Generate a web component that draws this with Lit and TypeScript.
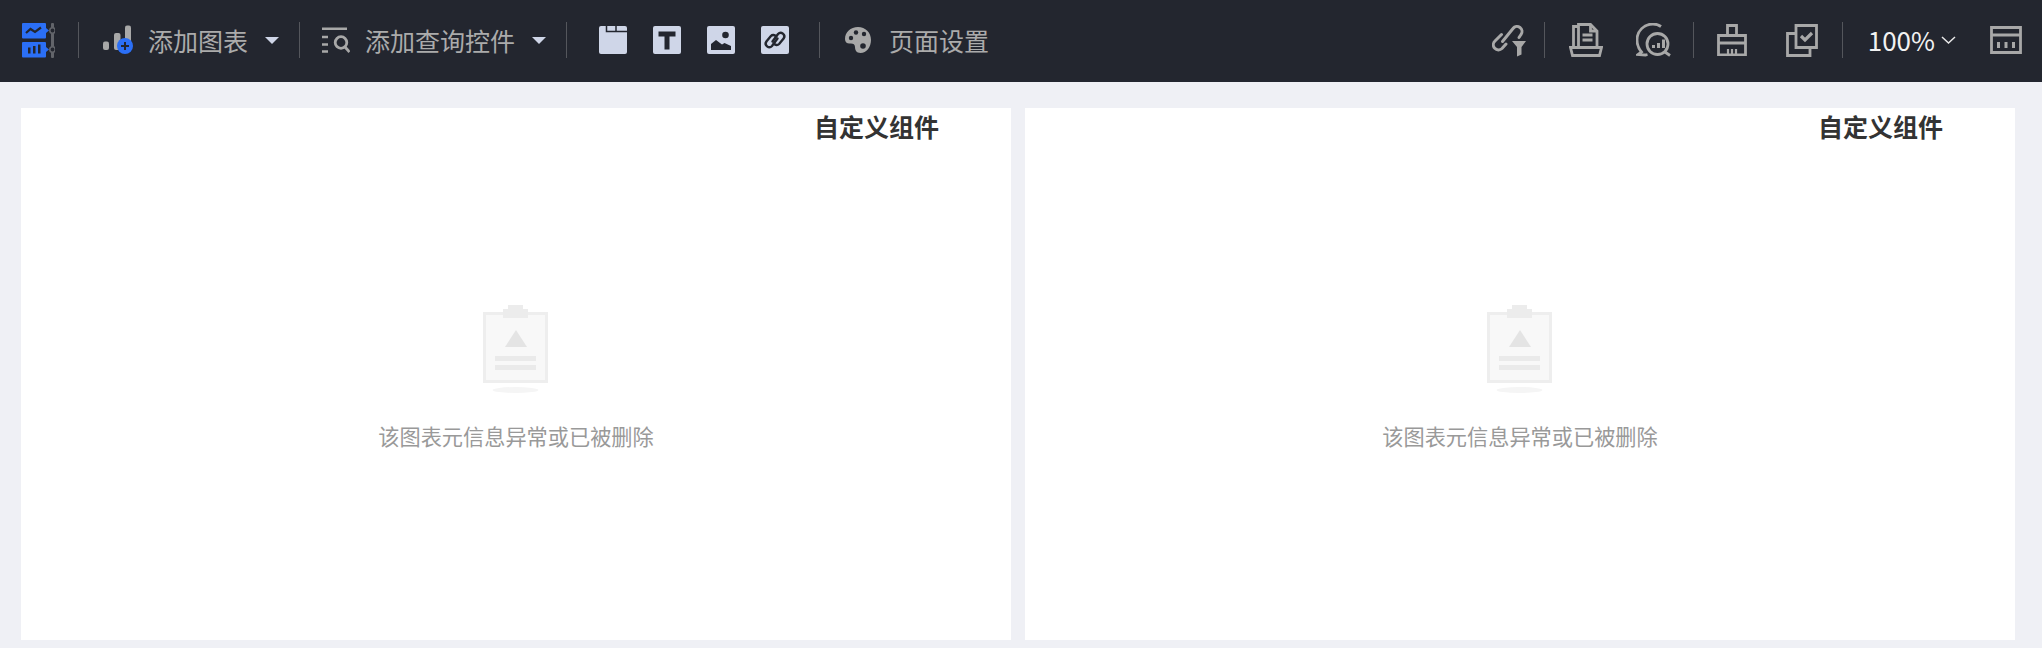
import { LitElement, html, css, svg } from "lit";
import { customElement } from "lit/decorators.js";

const L = "#cfd6e8", D = "#23262f", G = "#a8a8a8", B = "#2b6ff6";

const logo = svg`<rect x="1" y="1" width="24" height="15.5" rx="1" fill="${B}"/><path d="M25 6l3 2.5-3 2.5z" fill="${B}"/>
<polyline points="5,11 9.500,7 14,10 20,5.500" fill="none" stroke="${D}" stroke-width="2.200"/>
<rect x="1" y="20" width="24" height="15.500" rx="1" fill="${B}"/><path d="M25 25l3 2.500-3 2.500z" fill="${B}"/>
<path d="M7 25.500h2.500v6H7zM12 24h2.500v7.500H12zM17 22.500h2.500v9H17z" fill="${D}"/>
<rect x="30" y="1" width="3" height="35" rx="1" fill="#62646a"/>
<circle cx="31.500" cy="8.500" r="2.700" fill="${D}" stroke="#62646a" stroke-width="1.600"/>
<circle cx="31.500" cy="27.500" r="2.700" fill="${D}" stroke="#62646a" stroke-width="1.600"/>`;

const addChart = svg`<rect x="0" y="16.500" width="6" height="8.500" rx="2" fill="${G}"/>
<rect x="11" y="8" width="6.500" height="17" rx="2" fill="${G}"/>
<rect x="22" y="0.500" width="6" height="17" rx="2" fill="${G}"/>
<circle cx="22" cy="21" r="8" fill="${B}"/><path d="M18 21h8M22 17v8" stroke="${D}" stroke-width="2"/>`;

const query = svg`<path d="M0 1.800h25M0 10h6M0 17.500h6M0 24.500h6" stroke="${G}" stroke-width="2.600" fill="none"/>
<circle cx="19" cy="15.500" r="5.800" fill="none" stroke="${G}" stroke-width="2.800"/>
<path d="M23 20l4.500 5" stroke="${G}" stroke-width="2.800"/>`;

const board = svg`<rect x="0" y="0" width="28" height="28" rx="2" fill="${L}"/>
<path d="M7.500 0v5.500H28M17 0v5.500" fill="none" stroke="${D}" stroke-width="1.500"/>`;
const text = svg`<rect x="0" y="0" width="28" height="28" rx="2" fill="${L}"/>
<path d="M5.500 5.500h17v5h-6v13h-5v-13h-6z" fill="${D}"/>`;
const image = svg`<rect x="0" y="0" width="28" height="28" rx="2" fill="${L}"/>
<circle cx="18.500" cy="9" r="3.300" fill="${D}"/>
<path d="M4 24v-6l5-4 6 4.500 2.500-1.500 6.500 3v4z" fill="${D}"/>`;
const link = svg`<rect x="0" y="0" width="28" height="28" rx="2" fill="${L}"/>
<g fill="none" stroke="${D}" stroke-width="2.400" stroke-linecap="round">
<path d="M11.500 15.500l5.500-7.500a3.600 3.600 0 0 1 5.600 4.500l-4.500 5.500a3.300 3.300 0 0 1-5-.3"/>
<path d="M16.500 12.500l-5.500 7.500a3.600 3.600 0 0 1-5.600-4.500l4.500-5.500a3.300 3.300 0 0 1 5 .3"/></g>`;

const palette = svg`<path d="M13 0C5.500 0 0 5.200 0 12c0 3.500 2.300 4.800 5 4.500 3-.3 5 .8 5 3.500 0 3 1.500 6 5.500 6C21.500 26 26 20 26 13 26 5.500 20.500 0 13 0z" fill="${G}"/>
<circle cx="6" cy="11" r="2.200" fill="${D}"/><circle cx="11" cy="5.500" r="2.200" fill="${D}"/>
<circle cx="19" cy="7" r="2.200" fill="${D}"/><circle cx="18" cy="19" r="2.800" fill="${D}"/>`;

const linkFilter = svg`<g fill="none" stroke="${G}" stroke-width="3" stroke-linecap="round">
<path d="M9.500 11.500L3 18a5 5 0 0 0 7 7.500l4-4.500"/><path d="M10.500 18.500L21 5.500a5 5 0 0 1 8 6l-2 3"/></g>
<path d="M20 18h14l-4.500 6v7.500l-4.500 2V24z" fill="${G}"/>`;
const doc = svg`<g fill="none" stroke="${G}" stroke-width="2.800">
<path d="M4.500 24V3.500H9"/><path d="M9.500 24V1.500h12L28 8v16"/><path d="M21.500 1.500V8H28"/>
<path d="M13.500 12h10M13.500 17h10"/><path d="M1.500 24.500h31l-2 8h-27z"/></g>`;
const chat = svg`<g fill="none" stroke="${G}" stroke-width="2.800">
<path d="M25 3.500C22.500 1.700 20 1 17 1 8 1 1 8 1 17c0 5 2 9 4.500 12L2 31.500l7.500.5 2-.5"/>
<circle cx="21.500" cy="21" r="10.500"/><path d="M29 29l5 3.500"/></g>
<path d="M16 22h3v3h-3zM21 20h3v5h-3zM26 16.500h3v8.500h-3z" fill="${G}"/>`;
const brush = svg`<g fill="none" stroke="${G}" stroke-width="2.800">
<path d="M10.500 11V1.500h9V11"/><path d="M1.500 11.500h27v19.500h-27zM1.500 19h27"/>
<path d="M11 31v-6M15 31v-6M19 31v-6" stroke-width="2.200"/></g>`;
const check = svg`<g fill="none" stroke="${G}" stroke-width="2.800">
<path d="M10 1.500h20.500v22H10z"/><path d="M10 9.500H1.500v22H24v-8"/></g>
<path d="M15 12l4 4 7-7" fill="none" stroke="${G}" stroke-width="3.200"/>`;
const table = svg`<g fill="none" stroke="${G}" stroke-width="2.800"><path d="M1.500 1.500h29v25h-29zM1.500 9h29"/></g>
<path d="M7 16h3v6H7zM14.500 16h3v6h-3zM22 16h3v6h-3z" fill="${G}"/>`;

const empty = svg`<ellipse cx="32.500" cy="85" rx="23" ry="3" fill="#f5f5f5"/>
<rect x="1.500" y="8.500" width="62" height="68" fill="#f8f8f8" stroke="#eeeeee" stroke-width="3"/>
<path d="M25 0h15v4h5v9H20V4h5z" fill="#ececec"/>
<path d="M33 25l11 17H22z" fill="#e4e4e4"/>
<rect x="12" y="51" width="41" height="5" fill="#eaeaea"/>
<rect x="12" y="60" width="41" height="5" fill="#eaeaea"/>`;

@customElement("app-root")
export class AppRoot extends LitElement {
  static styles = css`
    :host { display: block; width: 2042px; height: 648px; background: #eff0f5; overflow: hidden;
      font-family: "Noto Sans CJK SC", "Liberation Sans", sans-serif; }
    .bar { height: 82px; background: #23262f; display: flex; align-items: center; padding: 0 20px 2px 21px; box-sizing: border-box; }
    .side { display: flex; align-items: center; }
    .grow { flex: 1; }
    svg { display: block; flex: none; }
    .sep { width: 1px; height: 36px; background: #54565c; flex: none; }
    .label { color: #ababab; font-size: 25px; line-height: 36px; white-space: nowrap; }
    .caret { width: 0; height: 0; border-left: 7px solid transparent; border-right: 7px solid transparent; border-top: 7px solid #cfd6e8; flex: none; }
    .zoom { color: #f2f2f2; font-size: 26px; line-height: 36px; }
    .m15 { margin-left: 15px; } .m17 { margin-left: 17px; } .m20 { margin-left: 20px; } .m21 { margin-left: 21px; }
    .m22 { margin-left: 22px; } .m23 { margin-left: 23px; } .m24 { margin-left: 24px; }
    .m18 { margin-left: 18px; } .m25 { margin-left: 25px; } .m26 { margin-left: 26px; }
    .m30 { margin-left: 30px; } .m32 { margin-left: 32px; } .m33 { margin-left: 33px; }
    .m6 { margin-left: 6px; } .m34 { margin-left: 34px; } .m39 { margin-left: 39px; }
    .panels { display: grid; grid-template-columns: 990px 990px; gap: 14px; padding: 26px 0 0 21px; }
    .panel { background: #fff; height: 532px; display: flex; flex-direction: column; align-items: center; }
    .title { align-self: stretch; text-align: right; padding-right: 72px; font-size: 25px; font-weight: 700; line-height: 36px; color: #333; }
    .pic { margin: 161px 1px 0 0; }
    .msg { margin-top: 27px; font-size: 21.2px; line-height: 32px; color: #999; }
  `;

  private icon(content: unknown, w: number, h: number, cls = "") {
    return html`<svg class=${cls} width=${w} height=${h} viewBox="0 0 ${w} ${h}">${content}</svg>`;
  }

  private panel() {
    return html`<div class="panel">
      <div class="title">自定义组件</div>
      <div class="pic">${this.icon(empty, 65, 88)}</div>
      <div class="msg">该图表元信息异常或已被删除</div>
    </div>`;
  }

  render() {
    return html`
      <div class="bar">
        <div class="side">
          ${this.icon(logo, 34, 36)}
          <div class="sep m23"></div>
          ${this.icon(addChart, 30, 30, "m24")}
          <span class="label m15">添加图表</span>
          <span class="caret m17"></span>
          <div class="sep m20"></div>
          ${this.icon(query, 28, 26, "m22")}
          <span class="label m15">添加查询控件</span>
          <span class="caret m17"></span>
          <div class="sep m20"></div>
          ${this.icon(board, 28, 28, "m32")}
          ${this.icon(text, 28, 28, "m26")}
          ${this.icon(image, 28, 28, "m26")}
          ${this.icon(link, 28, 28, "m26")}
          <div class="sep m30"></div>
          ${this.icon(palette, 26, 26, "m25")}
          <span class="label m18">页面设置</span>
        </div>
        <div class="grow"></div>
        <div class="side">
          ${this.icon(linkFilter, 34, 34)}
          <div class="sep m18"></div>
          ${this.icon(doc, 34, 34, "m24")}
          ${this.icon(chat, 36, 34, "m33")}
          <div class="sep m21"></div>
          ${this.icon(brush, 30, 32, "m23")}
          ${this.icon(check, 32, 33, "m39")}
          <div class="sep m24"></div>
          <span class="zoom m25">100%</span>
          <svg class="m6" width="15" height="9" viewBox="0 0 15 9"><path d="M1 1l6.500 6L14 1" fill="none" stroke="#e8e8e8" stroke-width="1.500"/></svg>
          ${this.icon(table, 32, 28, "m34")}
        </div>
      </div>
      <div class="panels">${this.panel()}${this.panel()}</div>
    `;
  }
}
